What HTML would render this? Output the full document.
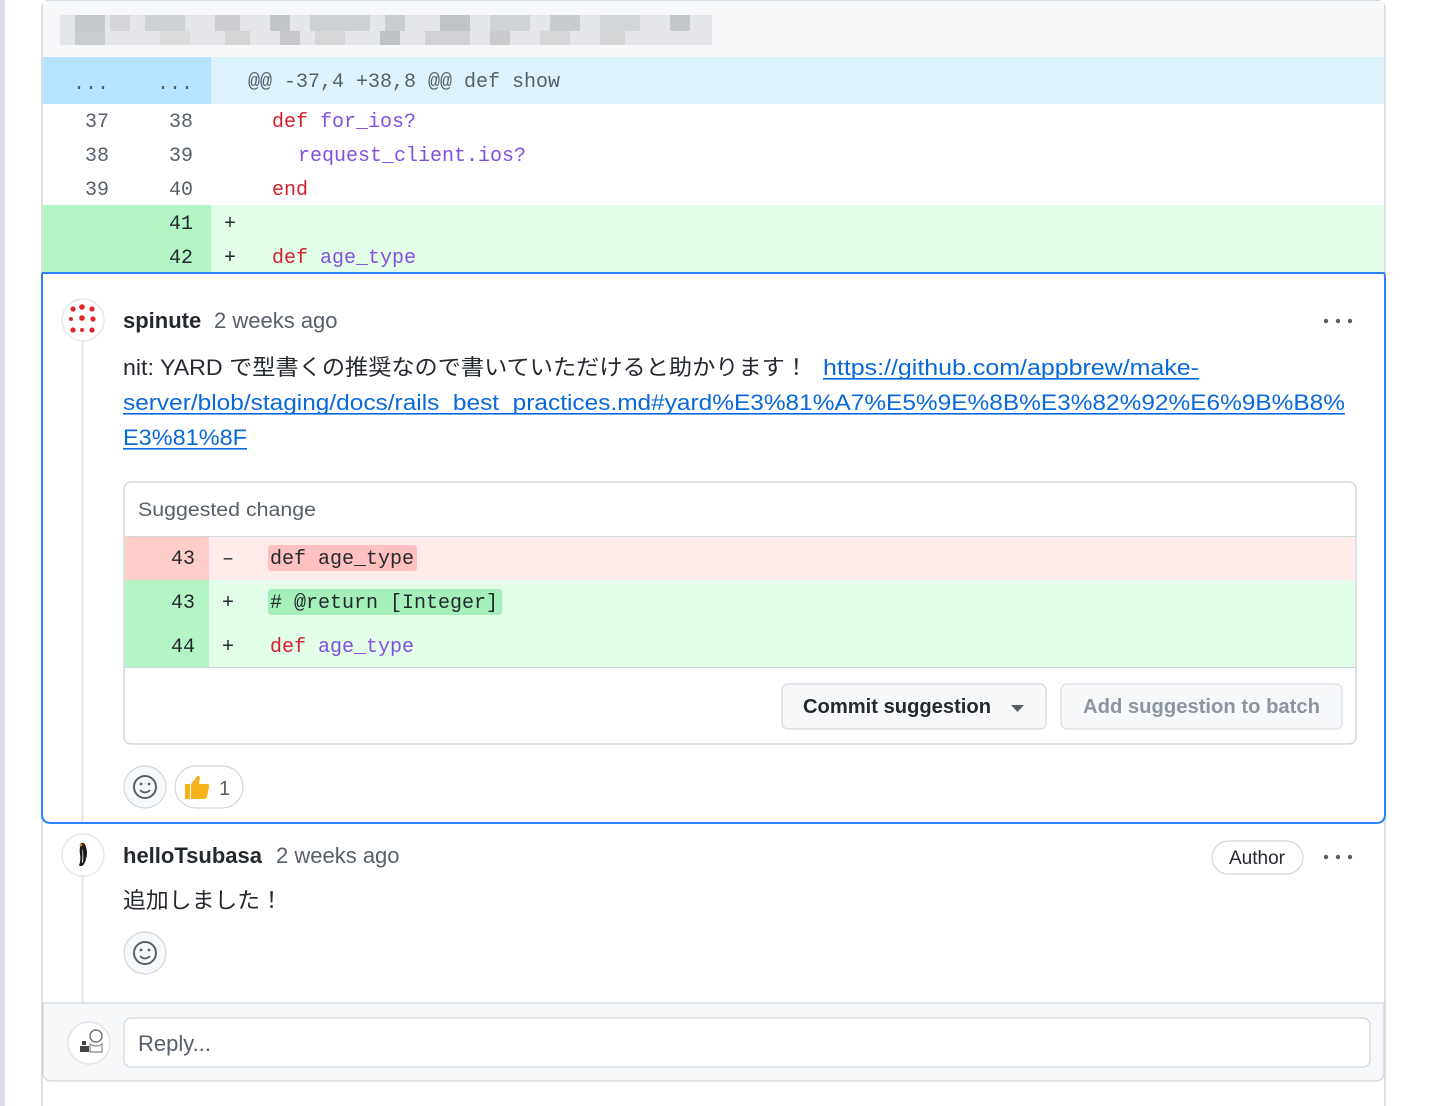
<!DOCTYPE html>
<html><head><meta charset="utf-8"><style>
html,body{margin:0;padding:0;background:#fff;width:1440px;height:1106px;overflow:hidden}
svg{display:block}
.mono{font-family:"Liberation Mono","DejaVu Sans Mono",monospace;font-size:20px}
.sans{font-family:"Liberation Sans","Noto Sans CJK JP",sans-serif}
</style></head><body>
<svg width="1440" height="1106" viewBox="0 0 1440 1106" xmlns="http://www.w3.org/2000/svg">
<!-- left page bar -->
<rect x="0" y="0" width="5" height="1106" fill="#d8dee4"/>
<!-- outer container -->
<path d="M42 1106 V10 Q42 0 52 0 H1374 Q1385 0 1385 10 V1106" fill="#fff" stroke="#d0d7de" stroke-width="1.5"/>
<!-- file header -->
<rect x="43" y="1" width="1341" height="56" fill="#f6f8fa"/>
<g>
<rect x="60" y="15" width="652" height="30" fill="#e4e6e9"/>
<rect x="75" y="15" width="30" height="16" fill="#c5c8cc"/><rect x="110" y="15" width="20" height="16" fill="#d3d5d8"/><rect x="145" y="15" width="40" height="16" fill="#cfd2d5"/><rect x="215" y="15" width="25" height="16" fill="#cbcdd1"/><rect x="270" y="15" width="20" height="16" fill="#c2c5c9"/><rect x="310" y="15" width="60" height="16" fill="#cdd0d4"/><rect x="385" y="15" width="20" height="16" fill="#c9ccd0"/><rect x="440" y="15" width="30" height="16" fill="#c0c3c7"/><rect x="490" y="15" width="40" height="16" fill="#d0d3d6"/><rect x="550" y="15" width="30" height="16" fill="#c8cbcf"/><rect x="600" y="15" width="40" height="16" fill="#d2d5d8"/><rect x="670" y="15" width="20" height="16" fill="#c4c7cb"/>
<rect x="75" y="31" width="30" height="14" fill="#cacdd0"/><rect x="160" y="31" width="30" height="14" fill="#dcdcdc"/><rect x="225" y="31" width="25" height="14" fill="#d4d4d4"/><rect x="280" y="31" width="20" height="14" fill="#c6c8cb"/><rect x="315" y="31" width="30" height="14" fill="#d5d7d9"/><rect x="380" y="31" width="20" height="14" fill="#c0c3c6"/><rect x="425" y="31" width="45" height="14" fill="#d0d2d5"/><rect x="490" y="31" width="20" height="14" fill="#c9cbcd"/><rect x="540" y="31" width="30" height="14" fill="#d6d7d9"/><rect x="600" y="31" width="25" height="14" fill="#d2d4d6"/>
</g>
<!-- hunk row -->
<rect x="43" y="57" width="1341" height="47" fill="#ddf4ff"/>
<rect x="43" y="57" width="168" height="47" fill="#b6e3ff"/>
<text class="mono" x="91" y="89" text-anchor="middle" fill="#57606a">...</text>
<text class="mono" x="175" y="89" text-anchor="middle" fill="#57606a">...</text>
<text class="mono" x="248" y="87" fill="#57606a">@@ -37,4 +38,8 @@ def show</text>
<!-- context rows -->
<g class="mono" fill="#57606a" text-anchor="end">
<text x="109" y="127">37</text><text x="193" y="127">38</text>
<text x="109" y="161">38</text><text x="193" y="161">39</text>
<text x="109" y="195">39</text><text x="193" y="195">40</text>
</g>
<text class="mono" x="272" y="127"><tspan fill="#cf222e">def</tspan> <tspan fill="#8250df">for_ios?</tspan></text>
<text class="mono" x="298" y="161" fill="#8250df">request_client.ios?</text>
<text class="mono" x="272" y="195" fill="#cf222e">end</text>
<!-- added rows -->
<rect x="43" y="205" width="1341" height="68" fill="#e2fde8"/>
<rect x="43" y="205" width="168" height="68" fill="#b4f5c6"/>
<g class="mono" fill="#24292f">
<text x="193" y="229" text-anchor="end">41</text><text x="193" y="263" text-anchor="end">42</text>
<text x="224" y="229">+</text><text x="224" y="263">+</text>
</g>
<text class="mono" x="272" y="263"><tspan fill="#cf222e">def</tspan> <tspan fill="#8250df">age_type</tspan></text>

<!-- comment box (blue) -->
<path d="M42 273 H1384 Q1385 273 1385 280 V814 Q1385 823 1376 823 H51 Q42 823 42 814 V273" fill="#fff" stroke="#2f81f7" stroke-width="2"/>
<!-- timeline line -->
<rect x="81" y="341" width="3" height="481" fill="#eaeef2"/>
<rect x="81" y="876" width="3" height="127" fill="#eaeef2"/>
<!-- avatar spinute -->
<circle cx="83" cy="320" r="21" fill="#fff" stroke="#e6e8eb" stroke-width="1.5"/>
<g fill="#e0262a">
<circle cx="73" cy="309" r="2.6"/><circle cx="82" cy="307" r="2.8"/><circle cx="92" cy="309" r="2.6"/>
<circle cx="71" cy="319" r="2"/><circle cx="82" cy="318" r="2.8"/><circle cx="93" cy="319" r="2.6"/>
<circle cx="73" cy="330" r="2.6"/><circle cx="82" cy="330" r="2"/><circle cx="92" cy="330" r="2.6"/>
</g>
<text class="sans" font-size="22" y="328"><tspan x="123" font-weight="bold" fill="#24292f">spinute</tspan><tspan x="214" fill="#57606a">2 weeks ago</tspan></text>
<g fill="#57606a"><circle cx="1326" cy="321" r="2.2"/><circle cx="1338" cy="321" r="2.2"/><circle cx="1350" cy="321" r="2.2"/></g>
<!-- comment body -->
<text class="sans" font-size="22" x="123" y="375" fill="#24292f" textLength="685" lengthAdjust="spacingAndGlyphs">nit: YARD で型書くの推奨なので書いていただけると助かります！</text>
<g class="sans" font-size="22" fill="#0969da">
<text x="823" y="375" textLength="376" lengthAdjust="spacingAndGlyphs">https://github.com/appbrew/make-</text>
<text x="123" y="410" textLength="1222" lengthAdjust="spacingAndGlyphs">server/blob/staging/docs/rails_best_practices.md#yard%E3%81%A7%E5%9E%8B%E3%82%92%E6%9B%B8%</text>
<text x="123" y="445" textLength="124" lengthAdjust="spacingAndGlyphs">E3%81%8F</text>
</g>
<g fill="#0969da"><rect x="823" y="378" width="376" height="1.6"/><rect x="123" y="413" width="1222" height="1.6"/><rect x="123" y="448" width="124" height="1.6"/></g>
<!-- suggested change box -->
<rect x="124" y="482" width="1232" height="262" rx="7" fill="#fff" stroke="#d0d7de" stroke-width="1.5"/>
<text class="sans" font-size="19" x="138" y="516" fill="#57606a" textLength="178" lengthAdjust="spacingAndGlyphs">Suggested change</text>
<rect x="124.5" y="536" width="1231" height="1" fill="#d0d7de"/>
<rect x="125" y="537" width="1230" height="43" fill="#ffebe9"/>
<rect x="125" y="537" width="84" height="43" fill="#ffcecb"/>
<rect x="125" y="580" width="1230" height="87" fill="#e2fde8"/>
<rect x="125" y="580" width="84" height="87" fill="#b4f5c6"/>
<rect x="124.5" y="667" width="1231" height="1" fill="#d0d7de"/>
<rect x="268" y="545" width="149" height="26" rx="3" fill="#ffc1c0"/>
<rect x="268" y="589" width="234" height="26" rx="3" fill="#a5efbb"/>
<g class="mono" fill="#24292f">
<text x="195" y="564" text-anchor="end">43</text><text x="222" y="564">–</text><text x="270" y="564">def age_type</text>
<text x="195" y="608" text-anchor="end">43</text><text x="222" y="608">+</text><text x="270" y="608"># @return [Integer]</text>
<text x="195" y="652" text-anchor="end">44</text><text x="222" y="652">+</text>
</g>
<text class="mono" x="270" y="652"><tspan fill="#cf222e">def</tspan> <tspan fill="#8250df">age_type</tspan></text>
<!-- buttons -->
<rect x="782" y="684" width="264" height="45" rx="6" fill="#f6f8fa" stroke="#d0d7de" stroke-width="1.2"/>
<text class="sans" font-size="20" x="803" y="713" fill="#24292f" font-weight="bold" textLength="188" lengthAdjust="spacingAndGlyphs" style="font-weight:600">Commit suggestion</text>
<path d="M1011 705 L1024 705 L1017.5 712 Z" fill="#57606a"/>
<rect x="1061" y="684" width="281" height="45" rx="6" fill="#f6f8fa" stroke="#d8dee4" stroke-width="1.2"/>
<text class="sans" font-size="20" x="1083" y="713" fill="#8c959f" font-weight="bold" textLength="237" lengthAdjust="spacingAndGlyphs">Add suggestion to batch</text>
<!-- reactions -->
<circle cx="145" cy="787" r="21" fill="#f6f8fa" stroke="#d0d7de" stroke-width="1.2"/>
<circle cx="145" cy="787" r="11" fill="none" stroke="#57606a" stroke-width="2"/>
<circle cx="141" cy="784" r="1.4" fill="#57606a"/><circle cx="149" cy="784" r="1.4" fill="#57606a"/>
<path d="M140 790 Q145 795 150 790" fill="none" stroke="#57606a" stroke-width="1.8"/>
<rect x="175" y="766" width="68" height="42" rx="21" fill="#fff" stroke="#d0d7de" stroke-width="1.2"/>
<path d="M185 784 h5 v15 h-5 z M191 784 l5 -6 q2 -4 4 -1 l-1 7 h8 q3 0 2 3 l-2 10 q-1 2 -3 2 h-13 z" fill="#f5b21b"/>
<text class="sans" font-size="20" x="219" y="795" fill="#57606a">1</text>

<!-- second comment -->
<circle cx="83" cy="855" r="21" fill="#fff" stroke="#e6e8eb" stroke-width="1.5"/>
<path d="M81 843 q4 -1 5 4 q2 6 0 12 q-1 5 -4 7 h-3 q2 -6 1 -12 q-1 -5 1 -11 z" fill="#1b1b1b"/>
<path d="M82 848 q2 5 1 14 q-2 2 -1 0 q1 -7 0 -14z" fill="#fff"/>
<circle cx="81" cy="845" r="1.4" fill="#e8821e"/>
<text class="sans" font-size="22" y="863"><tspan x="123" font-weight="bold" fill="#24292f">helloTsubasa</tspan><tspan x="276" fill="#57606a">2 weeks ago</tspan></text>
<rect x="1212" y="841" width="91" height="33" rx="16.5" fill="#fff" stroke="#d0d7de" stroke-width="1.2"/>
<text class="sans" font-size="19" x="1257" y="864" text-anchor="middle" fill="#24292f">Author</text>
<g fill="#57606a"><circle cx="1326" cy="857" r="2.2"/><circle cx="1338" cy="857" r="2.2"/><circle cx="1350" cy="857" r="2.2"/></g>
<text class="sans" font-size="22" x="123" y="908" fill="#24292f" textLength="160" lengthAdjust="spacingAndGlyphs">追加しました！</text>
<circle cx="145" cy="953" r="21" fill="#f6f8fa" stroke="#d0d7de" stroke-width="1.2"/>
<circle cx="145" cy="953" r="11" fill="none" stroke="#57606a" stroke-width="2"/>
<circle cx="141" cy="950" r="1.4" fill="#57606a"/><circle cx="149" cy="950" r="1.4" fill="#57606a"/>
<path d="M140 956 Q145 961 150 956" fill="none" stroke="#57606a" stroke-width="1.8"/>

<!-- reply area -->
<path d="M43 1003 H1384 V1072 Q1384 1081 1375 1081 H52 Q43 1081 43 1072 Z" fill="#f6f8fa" stroke="#d0d7de" stroke-width="1.2"/>
<rect x="124" y="1018" width="1246" height="49" rx="7" fill="#fff" stroke="#d0d7de" stroke-width="1.2"/>
<text class="sans" font-size="22" x="138" y="1051" fill="#57606a">Reply...</text>
<circle cx="89" cy="1043" r="21" fill="#fff" stroke="#e1e4e8" stroke-width="1.5"/>
<path d="M80 1046 h9 v6 h-9 z M82 1041 h4 v4 h-4 z" fill="#444"/>
<circle cx="96" cy="1036" r="6" fill="none" stroke="#777" stroke-width="1.5"/>
<path d="M90 1044 q6 4 12 0 v8 h-12 z" fill="none" stroke="#888" stroke-width="1.2"/>
</svg>
</body></html>
